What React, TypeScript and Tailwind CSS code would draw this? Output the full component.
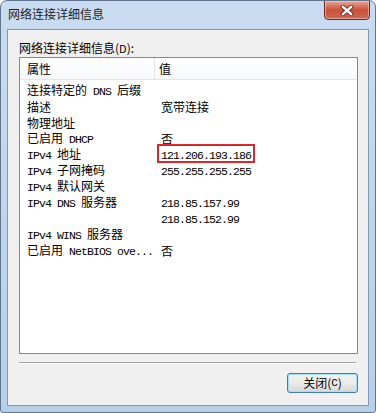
import React from 'react';

const rows: [string, string][] = [
  ['连接特定的 DNS 后缀', ''],
  ['描述', '宽带连接'],
  ['物理地址', ''],
  ['已启用 DHCP', '否'],
  ['IPv4 地址', '121.206.193.186'],
  ['IPv4 子网掩码', '255.255.255.255'],
  ['IPv4 默认网关', ''],
  ['IPv4 DNS 服务器', '218.85.157.99'],
  ['', '218.85.152.99'],
  ['IPv4 WINS 服务器', ''],
  ['已启用 NetBIOS ove...', '否'],
];

// ascii in a thin mono face, CJK in the sans one
const Mixed: React.FC<{ text: string }> = ({ text }) => (
  <>
    {text.split(/([\x00-\x7F]+)/).filter(Boolean).map((part, i) =>
      /^[\x00-\x7F]+$/.test(part) ? (
        <span key={i} className="font-['Liberation_Mono',monospace] text-[11.5px] tracking-[-0.9px] leading-[16px] whitespace-pre">
          {part}
        </span>
      ) : (
        <span key={i} className="leading-[16px]">{part}</span>
      )
    )}
  </>
);

const App: React.FC = () => {
  return (
    <div className="w-[376px] h-[413px] flex flex-col bg-gradient-to-b from-[#c9dcf1] to-[#b8cfe9] border border-[#5f7590] rounded-t-[7px] rounded-b-[3px] font-['Noto_Sans_CJK_SC',sans-serif] text-[12px] text-black overflow-hidden">
      {/* title bar */}
      <div className="h-[28px] flex items-start justify-between shrink-0">
        <div className="pl-[7px] pt-[5px] leading-[16px] text-[12px] text-[#1e1e1e]">网络连接详细信息</div>
        <div className="mr-[5px] w-[46px] h-[20px] -mt-px flex items-center justify-center rounded-b-[4px] border border-[#6e2a22] bg-gradient-to-b from-[#e8a596] via-[#c8503c] to-[#d36a55] shadow-[inset_0_0_0_1px_rgba(255,220,210,0.5)]">
          <svg width="14" height="11" viewBox="0 0 14 11">
            <path d="M3 2 L11 9 M11 2 L3 9" stroke="#5a2a24" strokeWidth="4.2" strokeLinecap="square" />
            <path d="M3 2 L11 9 M11 2 L3 9" stroke="#ffffff" strokeWidth="2.4" strokeLinecap="square" />
          </svg>
        </div>
      </div>

      {/* client area */}
      <div className="flex-1 mx-[6px] mb-[6px] border border-[#8499b3] bg-[#f0f0f0] flex flex-col pl-[11px] pr-[10px]">
        <div className="pt-[10px] h-[27px] leading-[16px]">网络连接详细信息(<span className="text-[11px]">D</span>):</div>

        <div className="h-[297px] border border-[#828790] bg-white flex flex-col leading-[16px]">
          <div className="h-[22px] flex items-stretch border-b border-[#e5e5e5] bg-gradient-to-b from-white to-[#f7f8fa] shrink-0">
            <div className="w-[135px] pl-[7px] flex items-center border-r border-[#e3e5e8]">属性</div>
            <div className="flex-1 pl-[4px] flex items-center">值</div>
          </div>
          <div className="pt-[3px]">
            {rows.map(([k, v], i) => (
              <div key={i} className="h-[16px] flex items-center overflow-visible">
                <div className="w-[141px] pl-[7px] whitespace-nowrap">
                  <Mixed text={k} />
                </div>
                <div className="relative whitespace-nowrap">
                  <Mixed text={v} />
                  {v === '121.206.193.186' && (
                    <div className="absolute left-[-4px] top-[-2px] w-[98px] h-[19px] border-2 border-[#e0262a]" />
                  )}
                </div>
              </div>
            ))}
          </div>
        </div>

        <div className="mt-[8px] h-[2px] border-t border-[#a0a0a0] border-b-white border-b mr-[2px]" />

        <div className="mt-[9px] flex justify-end">
          <button className="w-[71px] h-[20px] rounded-[3px] border border-[#3c7fb1] bg-gradient-to-b from-[#f2f2f2] via-[#ebebeb] to-[#d6d6d6] shadow-[inset_0_0_0_1px_#a6e0f5] flex items-center justify-center leading-none">
            关闭(<span className="font-['Liberation_Mono',monospace] text-[11px]">C</span>)
          </button>
        </div>
      </div>
    </div>
  );
};

export default App;
